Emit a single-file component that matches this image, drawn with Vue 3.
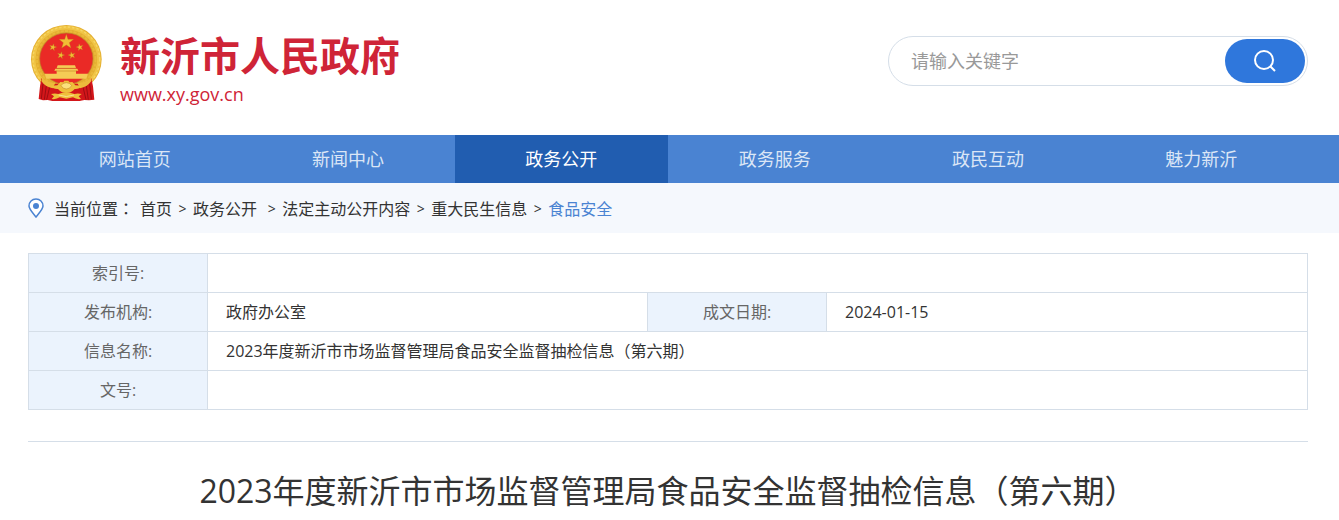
<script setup>
import { ref } from 'vue'

const keyword = ref('')
const active = ref('政务公开')

const menu = ['网站首页', '新闻中心', '政务公开', '政务服务', '政民互动', '魅力新沂']

const crumbs = ['首页', '政务公开 ', '法定主动公开内容', '重大民生信息', '食品安全']

const info = {
  index: '',
  org: '政府办公室',
  date: '2024-01-15',
  title: '2023年度新沂市市场监督管理局食品安全监督抽检信息（第六期）',
  number: ''
}

const search = () => {
  keyword.value = keyword.value.trim()
}
</script>

<template>
  <div class="page">
    <header class="wrap header">
      <a href="#" class="logo">
        <svg class="emblem" viewBox="30 27 216 234" aria-hidden="true">
          <!-- ring -->
          <ellipse cx="139" cy="133" rx="106" ry="103" fill="#e3ad2f" />
          <ellipse cx="139" cy="133" rx="98" ry="95" fill="none" stroke="#f0c445" stroke-width="11" />
          <ellipse cx="139" cy="133" rx="100" ry="97" fill="none" stroke="#f7d664" stroke-width="4" stroke-dasharray="7 6" />
          <ellipse cx="139" cy="133" rx="88" ry="85" fill="none" stroke="#e9b93a" stroke-width="6" stroke-dasharray="9 4" />
          <ellipse cx="139" cy="131" rx="80" ry="77" fill="#ea2a26" stroke="#b98229" stroke-width="2" />
          <!-- stars -->
          <g fill="#f2bd35" stroke="#b9731c" stroke-width="1">
            <path d="M139 58l5 15h17l-13 10 5 16-14-9-14 9 5-16-13-10h17z" />
            <path d="M101 86l1 8 8 2-8 3 1 8-5-6-8 3 4-7-5-6 8 2z" />
            <path d="M177 86l-1 8-8 2 8 3-1 8 5-6 8 3-4-7 5-6-8 2z" />
            <path d="M125 110l1 8 8 2-8 3 1 8-5-6-8 3 4-7-5-6 8 2z" />
            <path d="M153 110l-1 8-8 2 8 3-1 8 5-6 8 3-4-7 5-6-8 2z" />
          </g>
          <!-- gate tower -->
          <path d="M113 151h52l3 8h-58zM106 161h66l3 6h-72zM110 167h58v9h-58zM74 176h130l-5 15H79z" fill="#f5cb55" />
          <path d="M110 160h58M108 168h62" stroke="#c98927" stroke-width="2" />
          <!-- ribbons -->
          <path d="M64 190q14 14 42 16h66q28-2 42-16l5 24 4 40-16 2-14-1-14 3H97l-14-3-14 1-13-4 4-38z" fill="#d3161a" />
          <path d="M69 206l-5 46M79 212l-6 42M89 216l-9 38M209 206l5 46M199 212l6 42M189 216l9 38" stroke="#9c0d12" stroke-width="3" fill="none" />
          <path d="M66 190q14 12 40 14l-8 16q-22-4-34-22zM212 190q-14 12-40 14l8 16q22-4 34-22z" fill="#ecba3c" />
          <!-- gear and bow -->
          <path d="M92 213q12-2 20-2l9-10 9 1 3-5h12l3 5 9-1 9 10q8 0 20 2-8 10-22 9-10 12-25 12t-25-12q-14 1-22-9z" fill="#efbf3b" />
          <path d="M123 212q4-9 16-9t16 9q-5 10-16 10t-16-10z" fill="#fbe07c" stroke="#c58a25" stroke-width="2" />
          <path d="M93 237q12-3 22 0l13-4h22l13 4q10-3 22 0l-9 7 7 8q-14 2-24-5l-20 4-20-4q-10 7-24 5l7-8z" fill="#efbf3b" />
          <path d="M116 240q23 9 46 0" stroke="#fae391" stroke-width="3" fill="none" />
        </svg>
        <span class="names">
          <strong class="site">新沂市人民政府</strong>
          <span class="url">www.xy.gov.cn</span>
        </span>
      </a>
      <form class="search" @submit.prevent="search">
        <input v-model="keyword" type="text" placeholder="请输入关键字" aria-label="请输入关键字" />
        <button type="submit" aria-label="搜索">
          <svg width="24" height="24" viewBox="0 0 24 24" fill="none" stroke="#fff" stroke-width="2">
            <circle cx="11" cy="11" r="9" />
            <path d="M17 17L22 22" />
          </svg>
        </button>
      </form>
    </header>

    <nav class="nav">
      <ul class="wrap menu">
        <li v-for="item in menu" :key="item">
          <a href="#" :class="{ active: item === active }" @click.prevent="active = item">{{ item }}</a>
        </li>
      </ul>
    </nav>

    <div class="location">
      <div class="wrap crumbs">
        <svg class="pin" width="16" height="20" viewBox="0 0 16 20" aria-hidden="true">
          <path d="M8 1C4 1 1 4 1 8C1 11 4 14 8 19C12 14 15 11 15 8C15 4 12 1 8 1Z" fill="#fff" stroke="#4a83d2" stroke-width="1.5" />
          <circle cx="8" cy="8" r="3" fill="#4a83d2" />
        </svg>
        <span class="label">当前位置<span class="colon">：</span></span>
        <template v-for="(item, i) in crumbs" :key="item">
          <span v-if="i > 0" class="sep">&gt;</span>
          <a href="#" :class="{ current: i === crumbs.length - 1 }">{{ item }}</a>
        </template>
      </div>
    </div>

    <main class="wrap">
      <table class="info">
        <colgroup>
          <col class="col-label" />
          <col class="col-value" />
          <col class="col-label" />
          <col />
        </colgroup>
        <tbody>
          <tr>
            <th scope="row">索引号:</th>
            <td colspan="3">{{ info.index }}</td>
          </tr>
          <tr>
            <th scope="row">发布机构:</th>
            <td>{{ info.org }}</td>
            <th scope="row">成文日期:</th>
            <td>{{ info.date }}</td>
          </tr>
          <tr>
            <th scope="row">信息名称:</th>
            <td colspan="3">{{ info.title }}</td>
          </tr>
          <tr>
            <th scope="row">文号:</th>
            <td colspan="3">{{ info.number }}</td>
          </tr>
        </tbody>
      </table>
      <h1>{{ info.title }}</h1>
    </main>
  </div>
</template>

<style>
body {
  margin: 0;
  background: #fff;
}
</style>

<style scoped>
.page {
  font-family: "Open Sans", "Noto Sans CJK SC", sans-serif;
  font-size: 16px;
  color: #333;
}

.wrap {
  max-width: 1280px;
  margin: 0 auto;
  padding: 0 31px 0 28px;
}

a {
  color: inherit;
  text-decoration: none;
}

.header {
  display: flex;
  justify-content: space-between;
  align-items: flex-start;
  height: 135px;
}

.logo {
  display: flex;
  gap: 18px;
  padding: 24px 0 0 2px;
  color: #cf2437;
}

.emblem {
  width: 72px;
  height: 78px;
}

.names {
  display: flex;
  flex-direction: column;
  padding-top: 8px;
}

.site {
  font-size: 40px;
  line-height: 48px;
}

.url {
  font-size: 18px;
  line-height: 28px;
}

.search {
  display: flex;
  box-sizing: border-box;
  width: 420px;
  height: 50px;
  margin-top: 36px;
  padding: 2px;
  border: 1px solid #d5dee8;
  border-radius: 25px;
}

.search input {
  flex: 1;
  min-width: 0;
  padding: 0 20px;
  border: none;
  outline: none;
  background: none;
  font-family: inherit;
  font-size: 18px;
  color: #333;
}

.search input::placeholder {
  color: #999;
}

.search button {
  display: flex;
  justify-content: center;
  align-items: center;
  width: 80px;
  padding: 0;
  border: none;
  border-radius: 22px;
  background: #2f77dc;
  cursor: pointer;
}

.nav {
  background: #4a83d2;
}

.menu {
  display: flex;
  list-style: none;
}

.menu li {
  flex: 1;
}

.menu a {
  display: block;
  font-size: 18px;
  line-height: 48px;
  text-align: center;
  color: #dbe6f6;
}

.menu a.active {
  background: #215db0;
  color: #fff;
}

.location {
  background: #f5f8fd;
}

.crumbs {
  display: flex;
  align-items: center;
  height: 50px;
  white-space: pre;
}

.pin {
  margin-right: 10px;
}

.label {
  margin-right: 6px;
}

/* this cut centres the full-width colon */
.colon {
  font-family: "Noto Sans CJK TC", sans-serif;
}

.sep {
  width: 21px;
  font-size: 14px;
  text-align: center;
}

.current {
  color: #4a83d2;
}

.info {
  width: 100%;
  margin: 20px 0 31px;
  table-layout: fixed;
  border-collapse: collapse;
}

.col-label {
  width: 179px;
}

.col-value {
  width: 440px;
}

.info th,
.info td {
  height: 38px;
  padding: 0;
  border: 1px solid #d5dee8;
  line-height: 24px;
}

.info th {
  background: #ebf3fd;
  font-weight: normal;
  color: #666;
}

.info td {
  padding: 0 18px;
}

h1 {
  margin: 0;
  padding: 20px 0 0;
  border-top: 1px solid #d5dee8;
  font-size: 32px;
  font-weight: normal;
  line-height: 58px;
  text-align: center;
}
</style>
